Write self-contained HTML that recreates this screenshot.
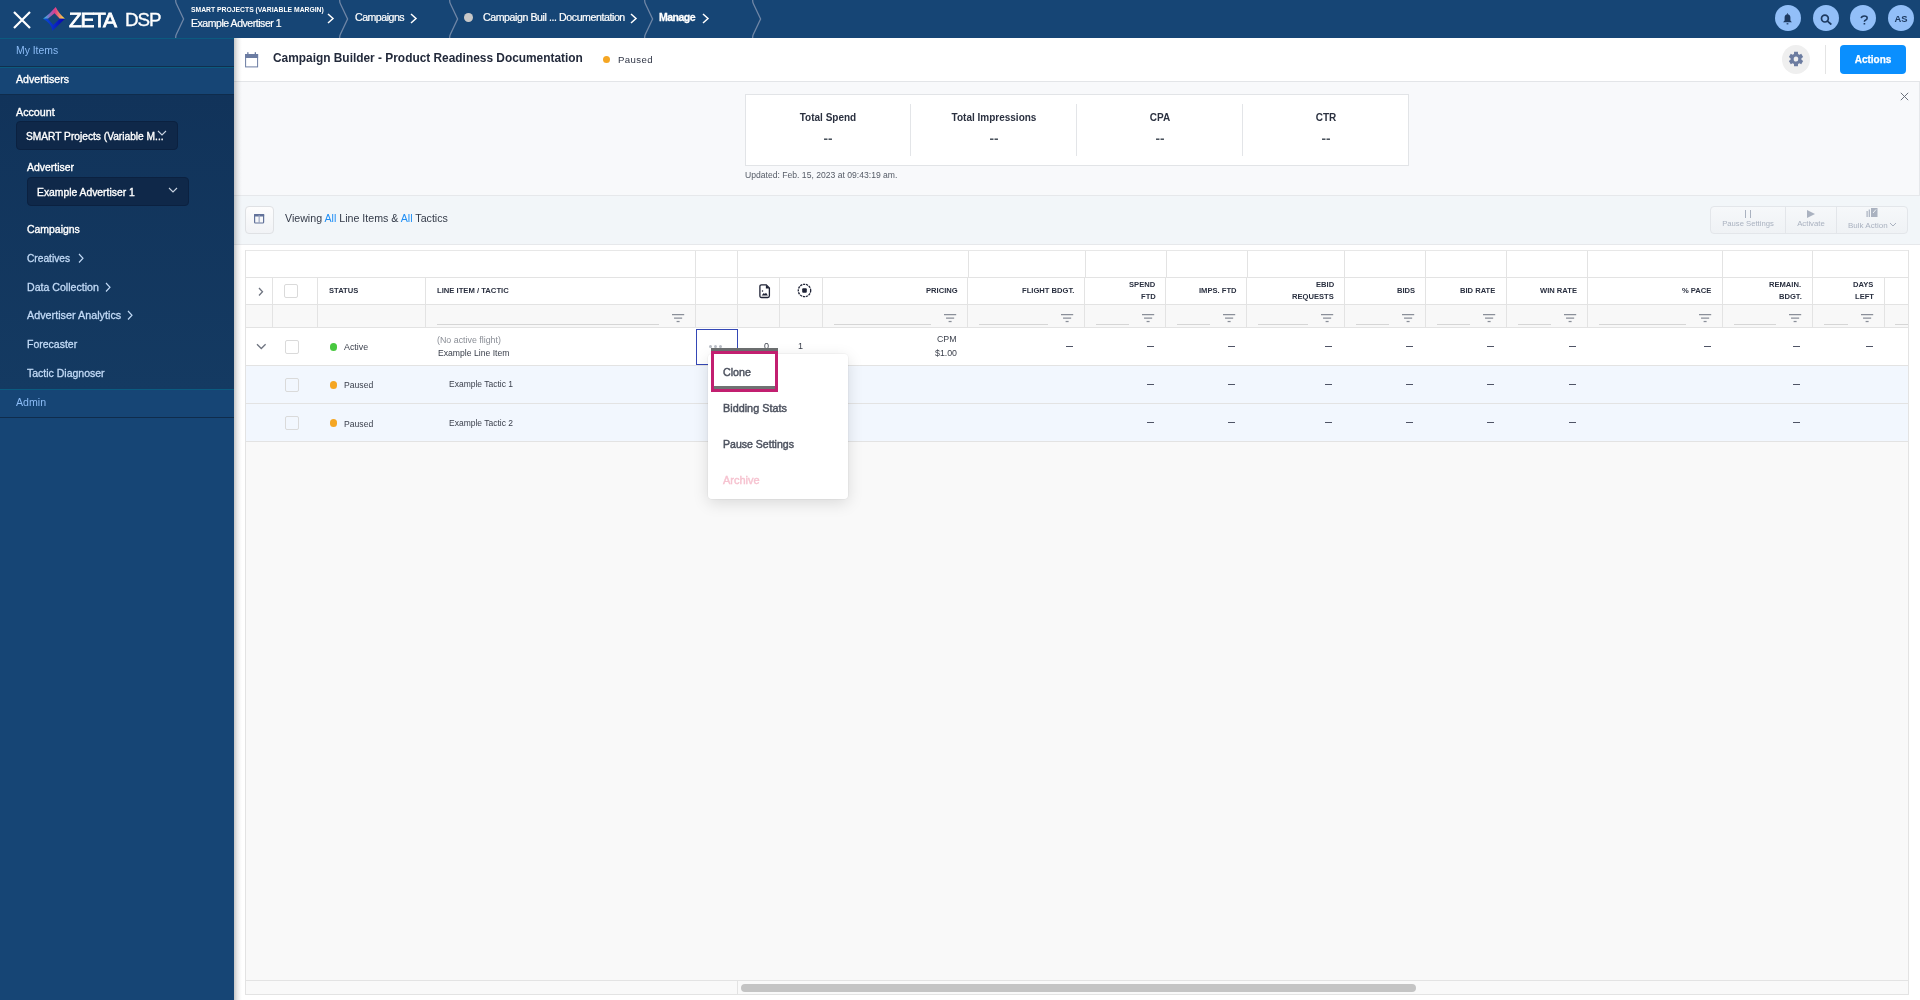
<!DOCTYPE html>
<html><head><meta charset="utf-8"><style>
html,body{margin:0;padding:0;width:1920px;height:1000px;overflow:hidden;background:#fff;font-family:"Liberation Sans", sans-serif;}
.a{position:absolute;}
.t{position:absolute;white-space:nowrap;will-change:transform;}
svg{display:block;}
</style></head><body>
<div class="a" style="left:234px;top:38px;width:1686px;height:43px;background:#fff;"></div>
<div class="a" style="left:234px;top:81px;width:1686px;height:1px;background:#e3e5e8;"></div>
<div class="a" style="left:234px;top:82px;width:1686px;height:113px;background:#f8f9fb;"></div>
<div class="a" style="left:234px;top:195px;width:1686px;height:1px;background:#e6e8eb;"></div>
<div class="a" style="left:234px;top:196px;width:1686px;height:48px;background:#f2f6f9;"></div>
<div class="a" style="left:234px;top:244px;width:1686px;height:1px;background:#e6e8eb;"></div>
<div class="a" style="left:234px;top:245px;width:1686px;height:755px;background:#fff;"></div>
<div class="a" style="left:246px;top:251px;width:1662px;height:743px;background:#f9f9f9;border:1px solid #e4e4e4;box-sizing:border-box;"></div>
<div class="a" style="left:0px;top:0px;width:1920px;height:38px;background:#164575;"></div>
<div class="a" style="left:0px;top:38px;width:234px;height:962px;background:#164575;"></div>
<div class="a" style="left:0px;top:38px;width:234px;height:1px;background:#0b5b80;"></div>
<div class="a" style="left:0px;top:66px;width:234px;height:1px;background:#10304f;"></div>
<div class="a" style="left:0px;top:67px;width:234px;height:1px;background:#0b5b80;"></div>
<div class="a" style="left:0px;top:94px;width:234px;height:1px;background:#0f2c4c;"></div>
<div class="a" style="left:0px;top:95px;width:234px;height:294px;background:linear-gradient(#11335a,#143a62);"></div>
<div class="a" style="left:0px;top:389px;width:234px;height:1px;background:#0b5b80;"></div>
<div class="a" style="left:0px;top:417px;width:234px;height:1px;background:#0f2c4c;"></div>
<div class="a" style="left:234px;top:38px;width:8px;height:962px;background:linear-gradient(to right, rgba(0,0,0,0.22), rgba(0,0,0,0.09) 40%, rgba(0,0,0,0.02) 80%, rgba(0,0,0,0));"></div>
<svg class="a" style="left:12px;top:10px;" width="20" height="20" viewBox="0 0 20 20"><path d="M2 2 L18 18 M18 2 L2 18" stroke="#fff" stroke-width="2.2" stroke-linecap="butt"/></svg>
<svg class="a" style="left:42px;top:6px;" width="25" height="26" viewBox="0 0 25 26"><defs>
<linearGradient id="lg1" x1="0" y1="0" x2="1" y2="0">
<stop offset="0" stop-color="#22c8f0"/><stop offset="0.3" stop-color="#8a68c0"/><stop offset="0.55" stop-color="#e03a88"/><stop offset="1" stop-color="#fff23a"/></linearGradient>
<linearGradient id="lg2" x1="0" y1="0" x2="1" y2="0">
<stop offset="0" stop-color="#0a50d8"/><stop offset="1" stop-color="#0a00b0"/></linearGradient>
</defs>
<path d="M1.1 12.7 Q8 8 13.7 1.1 Q17 8 23 12.7 L17.8 12.7 L12.5 7.2 L5.9 12.7 Z" fill="url(#lg1)"/>
<path d="M1.1 12.7 L5.9 12.7 L11.3 19.1 L17.8 12.7 L23 12.7 L10.5 24.7 Q9.5 17.5 1.1 12.7 Z" fill="url(#lg2)"/></svg>
<div class="t" style="left:69px;top:8.72px;font-size:21px;line-height:21px;color:#fff;letter-spacing:-1.4px;-webkit-text-stroke:0.8px #fff;">ZETA</div>
<div class="t" style="left:125px;top:10.59px;font-size:18.8px;line-height:18.8px;color:#fff;letter-spacing:-1.0px;-webkit-text-stroke:0.35px #fff;">DSP</div>
<svg class="a" style="left:175px;top:0px;" width="12" height="38" viewBox="0 0 12 38"><path d="M0.7 0 Q0.5 2 1.5 4 L8.6 19 L1.5 34 Q0.5 36 0.7 38" stroke="#6f86a6" stroke-width="1.3" fill="none"/></svg>
<svg class="a" style="left:339px;top:0px;" width="12" height="38" viewBox="0 0 12 38"><path d="M0.7 0 Q0.5 2 1.5 4 L8.6 19 L1.5 34 Q0.5 36 0.7 38" stroke="#6f86a6" stroke-width="1.3" fill="none"/></svg>
<svg class="a" style="left:449px;top:0px;" width="12" height="38" viewBox="0 0 12 38"><path d="M0.7 0 Q0.5 2 1.5 4 L8.6 19 L1.5 34 Q0.5 36 0.7 38" stroke="#6f86a6" stroke-width="1.3" fill="none"/></svg>
<svg class="a" style="left:644px;top:0px;" width="12" height="38" viewBox="0 0 12 38"><path d="M0.7 0 Q0.5 2 1.5 4 L8.6 19 L1.5 34 Q0.5 36 0.7 38" stroke="#6f86a6" stroke-width="1.3" fill="none"/></svg>
<svg class="a" style="left:752px;top:0px;" width="12" height="38" viewBox="0 0 12 38"><path d="M0.7 0 Q0.5 2 1.5 4 L8.6 19 L1.5 34 Q0.5 36 0.7 38" stroke="#6f86a6" stroke-width="1.3" fill="none"/></svg>
<div class="t" style="left:191px;top:6.94px;font-size:6.8px;line-height:6.8px;color:#fff;font-weight:700;letter-spacing:0px;">SMART PROJECTS (VARIABLE MARGIN)</div>
<div class="t" style="left:191px;top:18.41px;font-size:10.5px;line-height:10.5px;color:#fff;letter-spacing:-0.45px;-webkit-text-stroke:0.2px #fff;">Example Advertiser 1</div>
<svg class="a" style="left:327px;top:13px;" width="8" height="11" viewBox="0 0 8 11"><path d="M1 1 L6 5.5 L1 10" stroke="#fff" stroke-width="1.5" fill="none"/></svg>
<div class="t" style="left:355px;top:12.23px;font-size:10.6px;line-height:10.6px;color:#fff;letter-spacing:-0.5px;-webkit-text-stroke:0.2px #fff;">Campaigns</div>
<svg class="a" style="left:410px;top:13px;" width="8" height="11" viewBox="0 0 8 11"><path d="M1 1 L6 5.5 L1 10" stroke="#fff" stroke-width="1.5" fill="none"/></svg>
<div class="a" style="left:464px;top:13px;width:9px;height:9px;border-radius:50%;background:#c8c8c8;"></div>
<div class="t" style="left:482.5px;top:12.23px;font-size:10.6px;line-height:10.6px;color:#fff;letter-spacing:-0.42px;-webkit-text-stroke:0.2px #fff;">Campaign Buil ... Documentation</div>
<svg class="a" style="left:630px;top:13px;" width="8" height="11" viewBox="0 0 8 11"><path d="M1 1 L6 5.5 L1 10" stroke="#fff" stroke-width="1.5" fill="none"/></svg>
<div class="t" style="left:659px;top:12.31px;font-size:10.5px;line-height:10.5px;color:#fff;font-weight:700;letter-spacing:-0.5px;-webkit-text-stroke:0.3px #fff;">Manage</div>
<svg class="a" style="left:701.5px;top:13px;" width="8" height="11" viewBox="0 0 8 11"><path d="M1 1 L6 5.5 L1 10" stroke="#fff" stroke-width="1.5" fill="none"/></svg>
<div class="a" style="left:1774.5px;top:5.4px;width:26px;height:26px;border-radius:50%;background:#92bff8;"></div>
<div class="a" style="left:1812.6px;top:5.4px;width:26px;height:26px;border-radius:50%;background:#92bff8;"></div>
<div class="a" style="left:1850.4px;top:5.4px;width:26px;height:26px;border-radius:50%;background:#92bff8;"></div>
<div class="a" style="left:1888.4px;top:5.4px;width:26px;height:26px;border-radius:50%;background:#92bff8;"></div>
<svg class="a" style="left:1782px;top:13px;" width="11" height="12" viewBox="0 0 11 12"><path d="M5.5 1.2 C3.6 1.2 2.6 2.8 2.6 4.6 L2.6 7.6 L1.1 9.3 L9.9 9.3 L8.4 7.6 L8.4 4.6 C8.4 2.8 7.4 1.2 5.5 1.2 Z" fill="#1d3a60"/><rect x="4.6" y="10.2" width="1.8" height="1.2" fill="#1d3a60"/><rect x="5" y="0.4" width="1" height="1.2" fill="#1d3a60"/></svg>
<svg class="a" style="left:1819.5px;top:14px;" width="13" height="11" viewBox="0 0 13 11"><circle cx="4.9" cy="4.6" r="3.4" stroke="#1d3a60" stroke-width="1.7" fill="none"/><path d="M7.4 7.1 L10.8 10" stroke="#1d3a60" stroke-width="1.7" stroke-linecap="round"/></svg>
<svg class="a" style="left:1859.5px;top:14.5px;" width="9" height="10" viewBox="0 0 9 10"><path d="M1.2 3.2 Q1.6 1 4.3 1 Q7.2 1 7.2 3.1 Q7.2 4.6 5.4 5.2 Q4.4 5.6 4.4 6.8" stroke="#1d3a60" stroke-width="1.5" fill="none"/><rect x="3.6" y="8" width="1.6" height="1.5" fill="#1d3a60"/></svg>
<div class="t" style="left:1601.2px;width:600px;text-align:center;top:13.94px;font-size:9.4px;line-height:9.4px;color:#1d3a60;font-weight:700;letter-spacing:-0.1px;">AS</div>
<div class="t" style="left:16px;top:45.80px;font-size:10.4px;line-height:10.4px;color:#8cbcf6;">My Items</div>
<div class="t" style="left:16px;top:74.03px;font-size:10.6px;line-height:10.6px;color:#fff;-webkit-text-stroke:0.35px #fff;">Advertisers</div>
<div class="t" style="left:16px;top:106.54px;font-size:10.7px;line-height:10.7px;color:#fff;-webkit-text-stroke:0.35px #fff;">Account</div>
<div class="a" style="left:16px;top:121px;width:162px;height:29px;background:#0f2849;border:1px solid #0b2140;border-radius:4px;box-sizing:border-box;"></div>
<div class="t" style="left:26px;top:132.27px;font-size:10.2px;line-height:10.2px;color:#fff;-webkit-text-stroke:0.35px #fff;">SMART Projects (Variable M...</div>
<svg class="a" style="left:157px;top:130px;" width="10" height="7" viewBox="0 0 10 7"><path d="M1 1 L5 5 L9 1" stroke="#c9d4e2" stroke-width="1.1" fill="none"/></svg>
<div class="t" style="left:27px;top:163.35px;font-size:10.45px;line-height:10.45px;color:#fff;-webkit-text-stroke:0.35px #fff;">Advertiser</div>
<div class="a" style="left:27px;top:177px;width:162px;height:29px;background:#0f2849;border:1px solid #0b2140;border-radius:4px;box-sizing:border-box;"></div>
<div class="t" style="left:37px;top:188.44px;font-size:10.35px;line-height:10.35px;color:#fff;-webkit-text-stroke:0.35px #fff;">Example Advertiser 1</div>
<svg class="a" style="left:168px;top:187px;" width="10" height="7" viewBox="0 0 10 7"><path d="M1 1 L5 5 L9 1" stroke="#c9d4e2" stroke-width="1.1" fill="none"/></svg>
<div class="t" style="left:27px;top:224.55px;font-size:10.45px;line-height:10.45px;color:#fff;-webkit-text-stroke:0.35px #fff;">Campaigns</div>
<div class="t" style="left:27px;top:253.67px;font-size:10.2px;line-height:10.2px;color:#c2daf6;-webkit-text-stroke:0.3px #c2daf6;">Creatives</div>
<svg class="a" style="left:77.5px;top:253px;" width="7" height="10.5" viewBox="0 0 7 10.5"><path d="M1 1 L5 5.25 L1 9.5" stroke="#c2daf6" stroke-width="1.15" fill="none"/></svg>
<div class="t" style="left:27px;top:281.93px;font-size:10.6px;line-height:10.6px;color:#c2daf6;-webkit-text-stroke:0.3px #c2daf6;">Data Collection</div>
<svg class="a" style="left:105px;top:281.5px;" width="7" height="10.5" viewBox="0 0 7 10.5"><path d="M1 1 L5 5.25 L1 9.5" stroke="#c2daf6" stroke-width="1.15" fill="none"/></svg>
<div class="t" style="left:27px;top:310.06px;font-size:10.8px;line-height:10.8px;color:#c2daf6;-webkit-text-stroke:0.3px #c2daf6;">Advertiser Analytics</div>
<svg class="a" style="left:126.5px;top:310px;" width="7" height="10.5" viewBox="0 0 7 10.5"><path d="M1 1 L5 5.25 L1 9.5" stroke="#c2daf6" stroke-width="1.15" fill="none"/></svg>
<div class="t" style="left:27px;top:338.91px;font-size:10.5px;line-height:10.5px;color:#c2daf6;-webkit-text-stroke:0.3px #c2daf6;">Forecaster</div>
<div class="t" style="left:27px;top:368.11px;font-size:10.5px;line-height:10.5px;color:#c2daf6;-webkit-text-stroke:0.3px #c2daf6;">Tactic Diagnoser</div>
<div class="t" style="left:16px;top:396.73px;font-size:10.6px;line-height:10.6px;color:#8cbcf6;">Admin</div>
<svg class="a" style="left:245px;top:52px;" width="14" height="16" viewBox="0 0 14 16"><rect x="0.6" y="2.5" width="12" height="12.4" fill="none" stroke="#6b7ca2" stroke-width="1"/><rect x="0.1" y="2" width="13" height="4" fill="#6b7ca2"/><rect x="2.2" y="0.2" width="1.3" height="2.3" fill="#6b7ca2"/><rect x="9.7" y="0.2" width="1.3" height="2.3" fill="#6b7ca2"/></svg>
<div class="t" style="left:273px;top:52.63px;font-size:11.9px;line-height:11.9px;color:#232a3b;font-weight:700;">Campaign Builder - Product Readiness Documentation</div>
<div class="a" style="left:603px;top:56px;width:7px;height:7px;border-radius:50%;background:#f5a623;"></div>
<div class="t" style="left:617.7px;top:55.27px;font-size:9.6px;line-height:9.6px;color:#2f3545;letter-spacing:0.42px;">Paused</div>
<div class="a" style="left:1782px;top:45px;width:28px;height:29px;border-radius:50%;background:#efefef;"></div>
<svg class="a" style="left:1788px;top:51.2px;" width="16" height="16" viewBox="0 0 16 16"><polygon points="5.94,2.90 6.08,0.85 9.92,0.85 10.06,2.90 11.39,3.67 13.23,2.77 15.15,6.08 13.45,7.23 13.45,8.77 15.15,9.92 13.23,13.23 11.39,12.33 10.06,13.10 9.92,15.15 6.08,15.15 5.94,13.10 4.61,12.33 2.77,13.23 0.85,9.92 2.55,8.77 2.55,7.23 0.85,6.08 2.77,2.77 4.61,3.67" fill="#6c7ca0"/><ellipse cx="8" cy="8" rx="2.3" ry="2.6" fill="#efefef"/></svg>
<div class="a" style="left:1825px;top:45px;width:1px;height:29px;background:#e4e4e4;"></div>
<div class="a" style="left:1840px;top:45px;width:66px;height:29px;border-radius:4px;background:#0a8ffe;"></div>
<div class="t" style="left:1573px;width:600px;text-align:center;top:54.53px;font-size:10px;line-height:10px;color:#fff;font-weight:700;-webkit-text-stroke:0.25px #fff;">Actions</div>
<svg class="a" style="left:1900px;top:92px;" width="9" height="9" viewBox="0 0 9 9"><path d="M0.8 0.8 L8.2 8.2 M8.2 0.8 L0.8 8.2" stroke="#6a707c" stroke-width="1"/></svg>
<div class="a" style="left:745px;top:94px;width:664px;height:72px;background:#fff;border:1px solid #e2e4e7;box-sizing:border-box;"></div>
<div class="a" style="left:910px;top:104px;width:1px;height:52px;background:#e3e5e8;"></div>
<div class="a" style="left:1076px;top:104px;width:1px;height:52px;background:#e3e5e8;"></div>
<div class="a" style="left:1242px;top:104px;width:1px;height:52px;background:#e3e5e8;"></div>
<div class="t" style="left:528px;width:600px;text-align:center;top:112.73px;font-size:10px;line-height:10px;color:#2b3140;font-weight:700;">Total Spend</div>
<div class="t" style="left:528px;width:600px;text-align:center;top:131.57px;font-size:13.5px;line-height:13.5px;color:#4a525c;font-weight:700;">--</div>
<div class="t" style="left:693.5px;width:600px;text-align:center;top:112.73px;font-size:10px;line-height:10px;color:#2b3140;font-weight:700;">Total Impressions</div>
<div class="t" style="left:693.5px;width:600px;text-align:center;top:131.57px;font-size:13.5px;line-height:13.5px;color:#4a525c;font-weight:700;">--</div>
<div class="t" style="left:859.5px;width:600px;text-align:center;top:112.73px;font-size:10px;line-height:10px;color:#2b3140;font-weight:700;">CPA</div>
<div class="t" style="left:859.5px;width:600px;text-align:center;top:131.57px;font-size:13.5px;line-height:13.5px;color:#4a525c;font-weight:700;">--</div>
<div class="t" style="left:1025.5px;width:600px;text-align:center;top:112.73px;font-size:10px;line-height:10px;color:#2b3140;font-weight:700;">CTR</div>
<div class="t" style="left:1025.5px;width:600px;text-align:center;top:131.57px;font-size:13.5px;line-height:13.5px;color:#4a525c;font-weight:700;">--</div>
<div class="t" style="left:745px;top:170.72px;font-size:8.6px;line-height:8.6px;color:#555b66;">Updated: Feb. 15, 2023 at 09:43:19 am.</div>
<div class="a" style="left:245px;top:206px;width:29px;height:28px;background:linear-gradient(#fdfdfd,#f1f3f6);border:1px solid #dfe1e4;border-radius:4px;box-sizing:border-box;"></div>
<svg class="a" style="left:254px;top:213.5px;" width="11" height="10" viewBox="0 0 11 10"><rect x="0.6" y="0.6" width="9" height="8.4" rx="0.8" fill="none" stroke="#62729a" stroke-width="1.2"/><rect x="0" y="0" width="10.2" height="2.4" rx="0.6" fill="#62729a"/><rect x="4.6" y="1" width="1.1" height="8" fill="#98a4c0"/></svg>
<div class="t" style="left:284.6px;top:213.38px;font-size:10.65px;line-height:10.65px;color:#333a48;">Viewing <span style="color:#1e8ef5">All</span> Line Items &amp; <span style="color:#1e8ef5">All</span> Tactics</div>
<div class="a" style="left:1710px;top:206px;width:198px;height:28px;background:linear-gradient(#f6f8fa,#eff2f5);border:1px solid #e3e6ea;border-radius:4px;box-sizing:border-box;"></div>
<div class="a" style="left:1785px;top:207px;width:1px;height:26px;background:#e3e6ea;"></div>
<div class="a" style="left:1836px;top:207px;width:1px;height:26px;background:#e3e6ea;"></div>
<div class="a" style="left:1745px;top:210px;width:1px;height:8px;background:#aab2c0;"></div>
<div class="a" style="left:1750px;top:210px;width:1px;height:8px;background:#aab2c0;"></div>
<div class="t" style="left:1447.5px;width:600px;text-align:center;top:220.48px;font-size:7.7px;line-height:7.7px;color:#aab2c0;">Pause Settings</div>
<svg class="a" style="left:1806px;top:209px;" width="10" height="10" viewBox="0 0 10 10"><path d="M1 1 L9 5 L1 9 Z" fill="#aab2c0"/></svg>
<div class="t" style="left:1511px;width:600px;text-align:center;top:220.40px;font-size:7.8px;line-height:7.8px;color:#aab2c0;">Activate</div>
<svg class="a" style="left:1866px;top:207px;" width="13" height="11" viewBox="0 0 13 11"><rect x="0.5" y="4" width="1.2" height="6" fill="#aab2c0"/><rect x="2.7" y="2.5" width="1.2" height="7.5" fill="#aab2c0"/><rect x="5" y="1" width="6.5" height="9" fill="#aab2c0"/><path d="M7 6 L10 2.5" stroke="#eef1f4" stroke-width="1"/></svg>
<div class="t" style="left:1848px;top:222.23px;font-size:8px;line-height:8px;color:#aab2c0;">Bulk Action</div>
<svg class="a" style="left:1889px;top:222px;" width="8" height="6" viewBox="0 0 8 6"><path d="M1 1 L4 4 L7 1" stroke="#aab2c0" stroke-width="1" fill="none"/></svg>
<div class="a" style="left:245px;top:250px;width:1664px;height:745px;background:#f9f9f9;"></div>
<div class="a" style="left:246px;top:251px;width:1662px;height:26px;background:#fff;"></div>
<div class="a" style="left:246px;top:278px;width:1662px;height:26px;background:#fff;"></div>
<div class="a" style="left:246px;top:305px;width:1662px;height:22px;background:#f8f8f8;"></div>
<div class="a" style="left:246px;top:328px;width:1662px;height:37px;background:#fff;"></div>
<div class="a" style="left:246px;top:366px;width:1662px;height:37px;background:#f2f7fe;"></div>
<div class="a" style="left:246px;top:404px;width:1662px;height:37px;background:#f2f7fe;"></div>
<div class="a" style="left:246px;top:250px;width:1662px;height:1px;background:#e7e7e7;"></div>
<div class="a" style="left:245px;top:250px;width:1px;height:745px;background:#e3e3e3;"></div>
<div class="a" style="left:246px;top:277px;width:1662px;height:1px;background:#e3e3e3;"></div>
<div class="a" style="left:246px;top:304px;width:1662px;height:1px;background:#e3e3e3;"></div>
<div class="a" style="left:246px;top:327px;width:1662px;height:1px;background:#e3e3e3;"></div>
<div class="a" style="left:246px;top:365px;width:1662px;height:1px;background:#e3e3e3;"></div>
<div class="a" style="left:246px;top:403px;width:1662px;height:1px;background:#e3e3e3;"></div>
<div class="a" style="left:246px;top:441px;width:1662px;height:1px;background:#e3e3e3;"></div>
<div class="a" style="left:695px;top:251px;width:1px;height:26px;background:#e3e3e3;"></div>
<div class="a" style="left:737px;top:251px;width:1px;height:26px;background:#e3e3e3;"></div>
<div class="a" style="left:968px;top:251px;width:1px;height:26px;background:#e3e3e3;"></div>
<div class="a" style="left:1085px;top:251px;width:1px;height:26px;background:#e3e3e3;"></div>
<div class="a" style="left:1166px;top:251px;width:1px;height:26px;background:#e3e3e3;"></div>
<div class="a" style="left:1247px;top:251px;width:1px;height:26px;background:#e3e3e3;"></div>
<div class="a" style="left:1344px;top:251px;width:1px;height:26px;background:#e3e3e3;"></div>
<div class="a" style="left:1425px;top:251px;width:1px;height:26px;background:#e3e3e3;"></div>
<div class="a" style="left:1506px;top:251px;width:1px;height:26px;background:#e3e3e3;"></div>
<div class="a" style="left:1587px;top:251px;width:1px;height:26px;background:#e3e3e3;"></div>
<div class="a" style="left:1722px;top:251px;width:1px;height:26px;background:#e3e3e3;"></div>
<div class="a" style="left:1812px;top:251px;width:1px;height:26px;background:#e3e3e3;"></div>
<div class="a" style="left:272px;top:278px;width:1px;height:49px;background:#e3e3e3;"></div>
<div class="a" style="left:317px;top:278px;width:1px;height:49px;background:#e3e3e3;"></div>
<div class="a" style="left:425px;top:278px;width:1px;height:49px;background:#e3e3e3;"></div>
<div class="a" style="left:695px;top:278px;width:1px;height:49px;background:#e3e3e3;"></div>
<div class="a" style="left:737px;top:278px;width:1px;height:49px;background:#e3e3e3;"></div>
<div class="a" style="left:779px;top:278px;width:1px;height:49px;background:#e3e3e3;"></div>
<div class="a" style="left:822px;top:278px;width:1px;height:49px;background:#e3e3e3;"></div>
<div class="a" style="left:967px;top:278px;width:1px;height:49px;background:#e3e3e3;"></div>
<div class="a" style="left:1084px;top:278px;width:1px;height:49px;background:#e3e3e3;"></div>
<div class="a" style="left:1165px;top:278px;width:1px;height:49px;background:#e3e3e3;"></div>
<div class="a" style="left:1246px;top:278px;width:1px;height:49px;background:#e3e3e3;"></div>
<div class="a" style="left:1344px;top:278px;width:1px;height:49px;background:#e3e3e3;"></div>
<div class="a" style="left:1425px;top:278px;width:1px;height:49px;background:#e3e3e3;"></div>
<div class="a" style="left:1506px;top:278px;width:1px;height:49px;background:#e3e3e3;"></div>
<div class="a" style="left:1587px;top:278px;width:1px;height:49px;background:#e3e3e3;"></div>
<div class="a" style="left:1722px;top:278px;width:1px;height:49px;background:#e3e3e3;"></div>
<div class="a" style="left:1812px;top:278px;width:1px;height:49px;background:#e3e3e3;"></div>
<div class="a" style="left:1884px;top:278px;width:1px;height:49px;background:#e3e3e3;"></div>
<svg class="a" style="left:257.5px;top:286.5px;" width="6.5" height="9.5" viewBox="0 0 6.5 9.5"><path d="M1 1 L4.5 4.75 L1 8.5" stroke="#6f7480" stroke-width="1.3" fill="none"/></svg>
<div class="a" style="left:284px;top:284px;width:14px;height:14px;background:#fff;border:1.2px solid #dadada;border-radius:2px;box-sizing:border-box;"></div>
<div class="t" style="left:328.7px;top:286.67px;font-size:7.6px;line-height:7.6px;color:#2a3040;font-weight:700;">STATUS</div>
<div class="t" style="left:436.5px;top:286.62px;font-size:7.66px;line-height:7.66px;color:#2a3040;font-weight:700;">LINE ITEM / TACTIC</div>
<svg class="a" style="left:759px;top:283.5px;" width="12" height="15" viewBox="0 0 12 15"><path d="M2.5 0.9 H7.3 L10.4 4 V11.8 Q10.4 13.5 8.8 13.5 H2.5 Q0.9 13.5 0.9 11.8 V2.5 Q0.9 0.9 2.5 0.9 Z" stroke="#1e2235" stroke-width="1.3" fill="none"/><path d="M6.9 0.9 L10.4 4.4 L6.9 4.4 Z" fill="#1e2235"/><path d="M2.6 11.6 L4.8 9 L5.9 10 L7 8.7 L8.9 11.6 Z" fill="#1e2235"/><circle cx="3.5" cy="7" r="0.75" fill="#1e2235"/></svg>
<svg class="a" style="left:797.1px;top:283.1px;" width="15" height="15" viewBox="0 0 15 15"><circle cx="7.5" cy="7.5" r="6.2" fill="none" stroke="#1e2235" stroke-width="1.3" stroke-dasharray="2.2 0.8"/><rect x="5.2" y="5.2" width="4.6" height="4.6" rx="1" fill="#1e2235"/></svg>
<div class="t" style="right:962.8px;top:286.77px;font-size:7.6px;line-height:7.6px;color:#2a3040;font-weight:700;">PRICING</div>
<div class="t" style="right:846px;top:286.77px;font-size:7.6px;line-height:7.6px;color:#2a3040;font-weight:700;">FLIGHT BDGT.</div>
<div class="t" style="right:764.5px;top:280.57px;font-size:7.6px;line-height:7.6px;color:#2a3040;font-weight:700;">SPEND</div>
<div class="t" style="right:764.5px;top:292.57px;font-size:7.6px;line-height:7.6px;color:#2a3040;font-weight:700;">FTD</div>
<div class="t" style="right:683.5999999999999px;top:286.77px;font-size:7.6px;line-height:7.6px;color:#2a3040;font-weight:700;">IMPS. FTD</div>
<div class="t" style="right:586.2px;top:280.57px;font-size:7.6px;line-height:7.6px;color:#2a3040;font-weight:700;">EBID</div>
<div class="t" style="right:586.2px;top:292.57px;font-size:7.6px;line-height:7.6px;color:#2a3040;font-weight:700;">REQUESTS</div>
<div class="t" style="right:505.29999999999995px;top:286.77px;font-size:7.6px;line-height:7.6px;color:#2a3040;font-weight:700;">BIDS</div>
<div class="t" style="right:424.29999999999995px;top:286.77px;font-size:7.6px;line-height:7.6px;color:#2a3040;font-weight:700;">BID RATE</div>
<div class="t" style="right:343px;top:286.77px;font-size:7.6px;line-height:7.6px;color:#2a3040;font-weight:700;">WIN RATE</div>
<div class="t" style="right:208.20000000000005px;top:286.77px;font-size:7.6px;line-height:7.6px;color:#2a3040;font-weight:700;">% PACE</div>
<div class="t" style="right:118.5px;top:280.57px;font-size:7.6px;line-height:7.6px;color:#2a3040;font-weight:700;">REMAIN.</div>
<div class="t" style="right:118.5px;top:292.57px;font-size:7.6px;line-height:7.6px;color:#2a3040;font-weight:700;">BDGT.</div>
<div class="t" style="right:46.299999999999955px;top:280.57px;font-size:7.6px;line-height:7.6px;color:#2a3040;font-weight:700;">DAYS</div>
<div class="t" style="right:46.299999999999955px;top:292.57px;font-size:7.6px;line-height:7.6px;color:#2a3040;font-weight:700;">LEFT</div>
<div class="a" style="left:437px;top:324px;width:222px;height:1px;background:#d6d6d6;"></div>
<svg class="a" style="left:672px;top:313.7px;" width="13" height="9" viewBox="0 0 13 9"><rect x="0" y="0" width="12.2" height="1.25" fill="#8a8f99"/><rect x="2.05" y="3.5" width="8.1" height="1.25" fill="#8a8f99"/><rect x="4.6" y="6.9" width="3" height="1.25" fill="#8a8f99"/></svg>
<div class="a" style="left:834px;top:324px;width:97px;height:1px;background:#d6d6d6;"></div>
<svg class="a" style="left:944px;top:313.7px;" width="13" height="9" viewBox="0 0 13 9"><rect x="0" y="0" width="12.2" height="1.25" fill="#8a8f99"/><rect x="2.05" y="3.5" width="8.1" height="1.25" fill="#8a8f99"/><rect x="4.6" y="6.9" width="3" height="1.25" fill="#8a8f99"/></svg>
<div class="a" style="left:979px;top:324px;width:69px;height:1px;background:#d6d6d6;"></div>
<svg class="a" style="left:1061px;top:313.7px;" width="13" height="9" viewBox="0 0 13 9"><rect x="0" y="0" width="12.2" height="1.25" fill="#8a8f99"/><rect x="2.05" y="3.5" width="8.1" height="1.25" fill="#8a8f99"/><rect x="4.6" y="6.9" width="3" height="1.25" fill="#8a8f99"/></svg>
<div class="a" style="left:1096px;top:324px;width:33px;height:1px;background:#d6d6d6;"></div>
<svg class="a" style="left:1142px;top:313.7px;" width="13" height="9" viewBox="0 0 13 9"><rect x="0" y="0" width="12.2" height="1.25" fill="#8a8f99"/><rect x="2.05" y="3.5" width="8.1" height="1.25" fill="#8a8f99"/><rect x="4.6" y="6.9" width="3" height="1.25" fill="#8a8f99"/></svg>
<div class="a" style="left:1177px;top:324px;width:33px;height:1px;background:#d6d6d6;"></div>
<svg class="a" style="left:1223px;top:313.7px;" width="13" height="9" viewBox="0 0 13 9"><rect x="0" y="0" width="12.2" height="1.25" fill="#8a8f99"/><rect x="2.05" y="3.5" width="8.1" height="1.25" fill="#8a8f99"/><rect x="4.6" y="6.9" width="3" height="1.25" fill="#8a8f99"/></svg>
<div class="a" style="left:1258px;top:324px;width:50px;height:1px;background:#d6d6d6;"></div>
<svg class="a" style="left:1321px;top:313.7px;" width="13" height="9" viewBox="0 0 13 9"><rect x="0" y="0" width="12.2" height="1.25" fill="#8a8f99"/><rect x="2.05" y="3.5" width="8.1" height="1.25" fill="#8a8f99"/><rect x="4.6" y="6.9" width="3" height="1.25" fill="#8a8f99"/></svg>
<div class="a" style="left:1356px;top:324px;width:33px;height:1px;background:#d6d6d6;"></div>
<svg class="a" style="left:1402px;top:313.7px;" width="13" height="9" viewBox="0 0 13 9"><rect x="0" y="0" width="12.2" height="1.25" fill="#8a8f99"/><rect x="2.05" y="3.5" width="8.1" height="1.25" fill="#8a8f99"/><rect x="4.6" y="6.9" width="3" height="1.25" fill="#8a8f99"/></svg>
<div class="a" style="left:1437px;top:324px;width:33px;height:1px;background:#d6d6d6;"></div>
<svg class="a" style="left:1483px;top:313.7px;" width="13" height="9" viewBox="0 0 13 9"><rect x="0" y="0" width="12.2" height="1.25" fill="#8a8f99"/><rect x="2.05" y="3.5" width="8.1" height="1.25" fill="#8a8f99"/><rect x="4.6" y="6.9" width="3" height="1.25" fill="#8a8f99"/></svg>
<div class="a" style="left:1518px;top:324px;width:33px;height:1px;background:#d6d6d6;"></div>
<svg class="a" style="left:1564px;top:313.7px;" width="13" height="9" viewBox="0 0 13 9"><rect x="0" y="0" width="12.2" height="1.25" fill="#8a8f99"/><rect x="2.05" y="3.5" width="8.1" height="1.25" fill="#8a8f99"/><rect x="4.6" y="6.9" width="3" height="1.25" fill="#8a8f99"/></svg>
<div class="a" style="left:1599px;top:324px;width:87px;height:1px;background:#d6d6d6;"></div>
<svg class="a" style="left:1699px;top:313.7px;" width="13" height="9" viewBox="0 0 13 9"><rect x="0" y="0" width="12.2" height="1.25" fill="#8a8f99"/><rect x="2.05" y="3.5" width="8.1" height="1.25" fill="#8a8f99"/><rect x="4.6" y="6.9" width="3" height="1.25" fill="#8a8f99"/></svg>
<div class="a" style="left:1734px;top:324px;width:42px;height:1px;background:#d6d6d6;"></div>
<svg class="a" style="left:1789px;top:313.7px;" width="13" height="9" viewBox="0 0 13 9"><rect x="0" y="0" width="12.2" height="1.25" fill="#8a8f99"/><rect x="2.05" y="3.5" width="8.1" height="1.25" fill="#8a8f99"/><rect x="4.6" y="6.9" width="3" height="1.25" fill="#8a8f99"/></svg>
<div class="a" style="left:1824px;top:324px;width:24px;height:1px;background:#d6d6d6;"></div>
<svg class="a" style="left:1861px;top:313.7px;" width="13" height="9" viewBox="0 0 13 9"><rect x="0" y="0" width="12.2" height="1.25" fill="#8a8f99"/><rect x="2.05" y="3.5" width="8.1" height="1.25" fill="#8a8f99"/><rect x="4.6" y="6.9" width="3" height="1.25" fill="#8a8f99"/></svg>
<div class="a" style="left:1895px;top:324px;width:13px;height:1px;background:#d6d6d6;"></div>
<svg class="a" style="left:256px;top:343px;" width="11" height="8" viewBox="0 0 11 8"><path d="M1 1.2 L5.3 5.5 L9.6 1.2" stroke="#6f7480" stroke-width="1.3" fill="none"/></svg>
<div class="a" style="left:284.5px;top:340px;width:14.0px;height:14px;background:#fff;border:1.2px solid #dadada;border-radius:2px;box-sizing:border-box;"></div>
<div class="a" style="left:329.7px;top:343px;width:7.5px;height:7.5px;border-radius:50%;background:#48c83f;"></div>
<div class="t" style="left:344px;top:343.07px;font-size:8.9px;line-height:8.9px;color:#3a3f4b;">Active</div>
<div class="t" style="left:437px;top:335.51px;font-size:8.85px;line-height:8.85px;color:#8a8e96;">(No active flight)</div>
<div class="t" style="left:437.5px;top:348.93px;font-size:8.65px;line-height:8.65px;color:#3a3f4b;">Example Line Item</div>
<div class="t" style="right:1151px;top:341.58px;font-size:9px;line-height:9px;color:#3a3f4b;">0</div>
<div class="t" style="right:1117px;top:341.58px;font-size:9px;line-height:9px;color:#3a3f4b;">1</div>
<div class="t" style="right:963px;top:335.15px;font-size:8.8px;line-height:8.8px;color:#3a3f4b;">CPM</div>
<div class="t" style="right:963px;top:348.55px;font-size:8.8px;line-height:8.8px;color:#3a3f4b;">$1.00</div>
<div class="a" style="left:1066px;top:345.5px;width:7.400000000000091px;height:1.1999999999999886px;background:#4f5466;"></div>
<div class="a" style="left:1147px;top:345.5px;width:7.400000000000091px;height:1.1999999999999886px;background:#4f5466;"></div>
<div class="a" style="left:1228px;top:345.5px;width:7.400000000000091px;height:1.1999999999999886px;background:#4f5466;"></div>
<div class="a" style="left:1325px;top:345.5px;width:7.400000000000091px;height:1.1999999999999886px;background:#4f5466;"></div>
<div class="a" style="left:1406px;top:345.5px;width:7.400000000000091px;height:1.1999999999999886px;background:#4f5466;"></div>
<div class="a" style="left:1487px;top:345.5px;width:7.400000000000091px;height:1.1999999999999886px;background:#4f5466;"></div>
<div class="a" style="left:1569px;top:345.5px;width:7.400000000000091px;height:1.1999999999999886px;background:#4f5466;"></div>
<div class="a" style="left:1704px;top:345.5px;width:7.400000000000091px;height:1.1999999999999886px;background:#4f5466;"></div>
<div class="a" style="left:1793px;top:345.5px;width:7.400000000000091px;height:1.1999999999999886px;background:#4f5466;"></div>
<div class="a" style="left:1865.5px;top:345.5px;width:7.400000000000091px;height:1.1999999999999886px;background:#4f5466;"></div>
<div class="a" style="left:284.5px;top:378px;width:14.0px;height:14px;background:transparent;border:1.2px solid #dadada;border-radius:2px;box-sizing:border-box;"></div>
<div class="a" style="left:329.7px;top:381px;width:7.5px;height:7.5px;border-radius:50%;background:#f5a623;"></div>
<div class="t" style="left:344px;top:380.68px;font-size:8.65px;line-height:8.65px;color:#3a3f4b;">Paused</div>
<div class="t" style="left:448.5px;top:380.00px;font-size:8.5px;line-height:8.5px;color:#3a3f4b;">Example Tactic 1</div>
<div class="a" style="left:1147px;top:383.5px;width:7.400000000000091px;height:1.1999999999999886px;background:#4f5466;"></div>
<div class="a" style="left:1228px;top:383.5px;width:7.400000000000091px;height:1.1999999999999886px;background:#4f5466;"></div>
<div class="a" style="left:1325px;top:383.5px;width:7.400000000000091px;height:1.1999999999999886px;background:#4f5466;"></div>
<div class="a" style="left:1406px;top:383.5px;width:7.400000000000091px;height:1.1999999999999886px;background:#4f5466;"></div>
<div class="a" style="left:1487px;top:383.5px;width:7.400000000000091px;height:1.1999999999999886px;background:#4f5466;"></div>
<div class="a" style="left:1569px;top:383.5px;width:7.400000000000091px;height:1.1999999999999886px;background:#4f5466;"></div>
<div class="a" style="left:1793px;top:383.5px;width:7.400000000000091px;height:1.1999999999999886px;background:#4f5466;"></div>
<div class="a" style="left:284.5px;top:416px;width:14.0px;height:14px;background:transparent;border:1.2px solid #dadada;border-radius:2px;box-sizing:border-box;"></div>
<div class="a" style="left:329.7px;top:419px;width:7.5px;height:7.5px;border-radius:50%;background:#f5a623;"></div>
<div class="t" style="left:344px;top:419.68px;font-size:8.65px;line-height:8.65px;color:#3a3f4b;">Paused</div>
<div class="t" style="left:448.5px;top:419.00px;font-size:8.5px;line-height:8.5px;color:#3a3f4b;">Example Tactic 2</div>
<div class="a" style="left:1147px;top:421.5px;width:7.400000000000091px;height:1.1999999999999886px;background:#4f5466;"></div>
<div class="a" style="left:1228px;top:421.5px;width:7.400000000000091px;height:1.1999999999999886px;background:#4f5466;"></div>
<div class="a" style="left:1325px;top:421.5px;width:7.400000000000091px;height:1.1999999999999886px;background:#4f5466;"></div>
<div class="a" style="left:1406px;top:421.5px;width:7.400000000000091px;height:1.1999999999999886px;background:#4f5466;"></div>
<div class="a" style="left:1487px;top:421.5px;width:7.400000000000091px;height:1.1999999999999886px;background:#4f5466;"></div>
<div class="a" style="left:1569px;top:421.5px;width:7.400000000000091px;height:1.1999999999999886px;background:#4f5466;"></div>
<div class="a" style="left:1793px;top:421.5px;width:7.400000000000091px;height:1.1999999999999886px;background:#4f5466;"></div>
<div class="a" style="left:246px;top:980px;width:1662px;height:1px;background:#e3e3e3;"></div>
<div class="a" style="left:245px;top:994px;width:1664px;height:1px;background:#e3e3e3;"></div>
<div class="a" style="left:737px;top:980px;width:1px;height:14px;background:#e3e3e3;"></div>
<div class="a" style="left:741px;top:984px;width:675px;height:8px;border-radius:4px;background:#c4c4c4;"></div>
<div class="a" style="left:696px;top:329px;width:42px;height:36px;border:1.5px solid #3447b6;box-sizing:border-box;"></div>
<div class="a" style="left:709px;top:345px;width:3px;height:3px;border-radius:50%;background:#b8bcc4;"></div>
<div class="a" style="left:714px;top:345px;width:3px;height:3px;border-radius:50%;background:#b8bcc4;"></div>
<div class="a" style="left:719px;top:345px;width:3px;height:3px;border-radius:50%;background:#b8bcc4;"></div>
<div class="a" style="left:708px;top:354px;width:140px;height:145px;border-radius:4px;background:#fff;box-shadow:0 0 0 1px rgba(0,0,0,0.03), 0 4px 16px rgba(0,0,0,0.13);"></div>
<div class="t" style="left:723px;top:366.54px;font-size:10.7px;line-height:10.7px;color:#4d525f;-webkit-text-stroke:0.45px #4d525f;">Clone</div>
<div class="t" style="left:723px;top:402.82px;font-size:10.85px;line-height:10.85px;color:#4d525f;-webkit-text-stroke:0.45px #4d525f;">Bidding Stats</div>
<div class="t" style="left:723px;top:438.87px;font-size:10.55px;line-height:10.55px;color:#4d525f;-webkit-text-stroke:0.45px #4d525f;">Pause Settings</div>
<div class="t" style="left:723px;top:475.19px;font-size:11px;line-height:11px;color:#f6c3d0;-webkit-text-stroke:0.4px #f6c3d0;">Archive</div>
<div class="a" style="left:711px;top:348px;width:67px;height:3px;background:#6a6d6e;"></div>
<div class="a" style="left:711px;top:351px;width:67px;height:41px;border:3px solid #c21f70;box-sizing:border-box;"></div>
<div class="a" style="left:714px;top:385.5px;width:61px;height:3.5px;background:#6f7272;"></div>
<div class="a" style="left:1908px;top:250px;width:1px;height:745px;background:#e3e3e3;"></div>
<div class="a" style="left:1919px;top:82px;width:1px;height:113px;background:#e6e8eb;"></div>
</body></html>
